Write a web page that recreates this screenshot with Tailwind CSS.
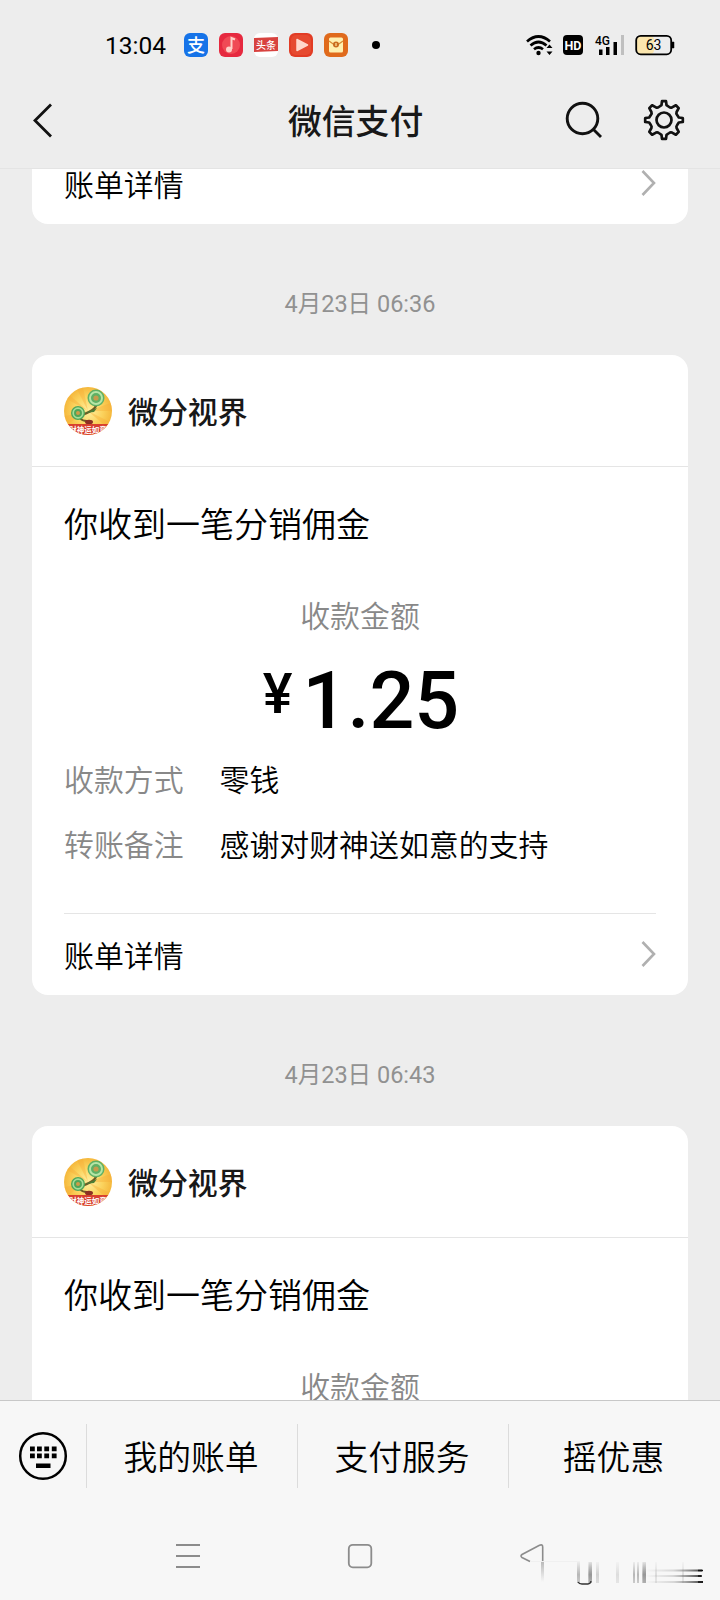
<!DOCTYPE html>
<html lang="zh-CN">
<head>
<meta charset="utf-8">
<title>微信支付</title>
<script src="https://cdn.jsdelivr.net/npm/@tailwindcss/browser@4"></script>
</head>
<body class="bg-[#ededed] font-['Noto_Sans_CJK_SC',sans-serif] font-[350] text-black">
<svg width="0" height="0" class="absolute">
  <defs>
    <radialGradient id="gold"><stop offset="0" stop-color="#fff0a0"/><stop offset=".6" stop-color="#fbd35e"/><stop offset="1" stop-color="#f5b83c"/></radialGradient>
    <clipPath id="disc"><circle cx="24" cy="24" r="24"/></clipPath>
    <symbol id="avatar" viewBox="0 0 48 48">
      <g clip-path="url(#disc)">
        <rect width="48" height="48" fill="url(#gold)"/>
        <path d="M24 24L-4 8V0ZM24 24L10-4H18ZM24 24L52 14V24ZM24 24L52 38V48ZM24 24L-4 30V42Z" fill="#f7ac36" opacity=".4"/>
        <path d="M14 29Q33 24 33 15M16 31Q18 34 23 34L27 36" fill="none" stroke="#6d5a24" stroke-width="2.2"/>
        <path d="M21 26L33 21L30 25Z" fill="#4b7d35"/>
        <circle cx="32" cy="11" r="8.500" fill="#5fb065"/><circle cx="32" cy="11" r="6" fill="none" stroke="#b6e5a5" stroke-width="2"/><circle cx="32" cy="11" r="2.6" fill="#c59c4c"/>
        <circle cx="14" cy="26" r="7" fill="#4fa558"/><circle cx="14" cy="26" r="4.8" fill="none" stroke="#a6de98" stroke-width="1.7"/><circle cx="14" cy="26" r="2" fill="#d09b48"/>
        <ellipse cx="25" cy="35" rx="4" ry="2.3" fill="#8c3024"/>
        <rect y="37" width="48" height="11" fill="#d8402f"/>
        <text x="24" y="45.800" text-anchor="middle" font-size="7.500" font-weight="700" fill="#fff">财神运如意</text>
      </g>
    </symbol>
    <symbol id="chevron" viewBox="0 0 16 28"><path d="M2.500 2L14 14L2.500 26" fill="none" stroke="#b0b0b0" stroke-width="2.600"/></symbol>
  </defs>
</svg>
<div class="flex h-[1600px] w-[720px] flex-col overflow-hidden">
  <header class="flex h-[169px] shrink-0 flex-col border-b border-[#e4e4e4] bg-[#ededed]">
    <div class="flex h-20 items-center pt-[9px] pl-[105px]">
      <span class="w-[79px] pt-0.5 font-[Roboto,sans-serif] text-[24.5px] leading-8 font-normal">13:04</span>
      <div class="flex gap-[11px]">
        <svg width="24" height="24"><rect width="24" height="24" rx="6" fill="#1673e8"/><text x="12" y="18.500" text-anchor="middle" font-size="18" font-weight="500" fill="#fff">支</text></svg>
        <svg width="24" height="24"><rect width="24" height="24" rx="6" fill="#e6293f"/><circle cx="12" cy="12" r="9" fill="#f04a55"/><path d="M12.500 16V5L16 6.500" fill="none" stroke="#ffd0c8" stroke-width="2"/><circle cx="10" cy="16.500" r="3" fill="#ffd0c8"/></svg>
        <svg width="24" height="24"><rect width="24" height="24" rx="6" fill="#fff"/><path d="M0 5L24 4V18L0 19Z" fill="#d8423f"/><text x="12" y="15.500" text-anchor="middle" font-size="10" font-weight="500" fill="#fff">头条</text></svg>
        <svg width="24" height="24"><rect width="24" height="24" rx="6" fill="#e23c25"/><rect x="2" y="2" width="20" height="20" rx="5" fill="#e64a30"/><path d="M8 6.500L18.500 12L8 17.500Z" fill="#ffd8cc" stroke="#ffd8cc" stroke-width="1.500" stroke-linejoin="round"/></svg>
        <svg width="24" height="24"><rect width="24" height="24" rx="6" fill="#e06a1c"/><rect x="5" y="4.500" width="14" height="15" rx="1.500" fill="#fff0b0"/><path d="M5 8L12 13L19 8" fill="none" stroke="#d98a34" stroke-width="1.300"/><circle cx="12" cy="11.500" r="3" fill="#c96b1f"/><path d="M12 10V13" stroke="#ffe9a0" stroke-width="1.200"/></svg>
      </div>
      <span class="ml-[24px] h-2 w-2 rounded-full bg-black"></span>
      <svg class="ml-[146px]" width="160" height="24" viewBox="0 0 160 24">
        <g fill="none" stroke="#000" stroke-width="2.700"><path d="M1 8.500Q12.500-1.500 24 8.500M4.500 12.500Q12.500 5.500 20.500 12.500M8 16.300Q12.500 12.700 17 16.300"/></g>
        <circle cx="12.500" cy="20" r="2.200"/><path d="M20.500 14L23.500 10.500L26.500 14ZM20.500 17.500L23.500 21L26.500 17.500Z" transform="translate(0 1)"/>
        <rect x="37" y="2" width="20" height="20" rx="4"/><text x="47" y="16.500" text-anchor="middle" font-family="Roboto,sans-serif" font-size="12.500" font-weight="700" fill="#fff">HD</text>
        <text x="69" y="12" font-family="Roboto,sans-serif" font-size="13" font-weight="500" textLength="15" lengthAdjust="spacingAndGlyphs">4G</text>
        <path d="M73 16.500h3.500V22H73ZM80 14h3.500v8H80ZM87.500 9h3.500v13H87.500Z"/><path d="M95 2h3v20H95Z" fill="#bfbfbf"/>
        <rect x="111" y="3" width="17" height="18" rx="4" fill="#fbe6ae"/><rect x="110.200" y="2.800" width="35" height="18.500" rx="4.500" fill="none" stroke="#000" stroke-width="1.800"/><path d="M146 9h2v6h-2Z" stroke="#000" stroke-width=".5"/>
        <text x="127.500" y="17" text-anchor="middle" font-family="Roboto,sans-serif" font-size="14" font-weight="400">63</text>
      </svg>
    </div>
    <div class="flex h-20 items-center px-8 pr-[35px]">
      <svg width="24" height="36" viewBox="0 0 24 36"><path d="M19 2.500L3 18.500L19 34.500" fill="none" stroke="#111" stroke-width="2.800"/></svg>
      <h1 class="mb-px ml-[232px] text-[33.8px] leading-none font-medium whitespace-nowrap text-[#181818]">微信支付</h1>
      <svg class="ml-auto" width="40" height="40" viewBox="0 0 40 40"><g fill="none" stroke="#111" stroke-width="2.900"><circle cx="18.500" cy="18.500" r="15.300"/><path d="M29 29L37 37"/></g></svg>
      <svg class="ml-[39px]" width="42" height="42" viewBox="-21 -21 42 42"><g fill="none" stroke="#111" stroke-width="2.700" stroke-linejoin="round"><circle r="7.500"/><path d="M-5.200-13L-2.500-14.800L-2-18.800H2L2.500-14.800L5.200-13Q6.500-12 8-12.600L11.900-14.700L14.700-11.900L12.600-8Q12-6.500 13-5.200L14.800-2.500L18.800-2V2L14.800 2.500L13 5.200Q12 6.500 12.600 8L14.700 11.900L11.900 14.700L8 12.600Q6.500 12 5.200 13L2.500 14.800L2 18.800H-2L-2.500 14.800L-5.200 13Q-6.500 12-8 12.600L-11.900 14.700L-14.700 11.900L-12.600 8Q-12 6.500-13 5.200L-14.800 2.500L-18.800 2V-2L-14.800-2.500L-13-5.200Q-12-6.500-12.600-8L-14.700-11.900L-11.900-14.700L-8-12.600Q-6.500-12-5.200-13Z"/></g></svg>
    </div>
  </header>
  <main class="h-[1231px] shrink-0 overflow-hidden px-8">
    <section class="flex h-[55px] items-start justify-between rounded-b-2xl bg-white px-8">
      <span class="text-[29.9px] leading-[28px]">账单详情</span>
      <svg width="16" height="28"><use href="#chevron"/></svg>
    </section>
    <div class="flex h-[131px] items-center justify-center pt-[30px] font-[Roboto,'Noto_Sans_CJK_SC',sans-serif] text-[23.5px] font-normal text-[#919191]">4月23日 06:36</div>
    <section class="flex h-[640px] flex-col rounded-2xl bg-white">
      <div class="flex h-[112px] shrink-0 items-center gap-4 border-b border-[#e5e5e5] px-8">
        <svg width="48" height="48"><use href="#avatar"/></svg>
        <span class="mb-0.5 text-[29.9px] leading-10 font-medium text-[#181818]">微分视界</span>
      </div>
      <div class="mt-7 px-8 text-[34px] leading-[56px]">你收到一笔分销佣金</div>
      <div class="mt-[43px] text-center text-[29.9px] leading-10 text-[#888]">收款金额</div>
      <div class="flex h-[124px] items-start justify-center gap-2.5 pl-0.5 font-[Roboto,sans-serif] font-medium">
        <span class="mt-[34px] text-[56px] leading-[52px]">¥</span><span class="text-[79px] leading-[135px]">1.25</span>
      </div>
      <div class="flex gap-9 px-8 text-[29.9px] leading-10"><span class="text-[#888]">收款方式</span><span>零钱</span></div>
      <div class="mt-[25px] flex gap-9 px-8 text-[29.9px] leading-10"><span class="text-[#888]">转账备注</span><span>感谢对财神送如意的支持</span></div>
      <div class="mx-8 mt-auto flex h-[82px] items-center justify-between border-t border-[#e5e5e5]">
        <span class="mb-0.5 text-[29.9px] leading-10">账单详情</span>
        <svg class="mb-0.5" width="16" height="28"><use href="#chevron"/></svg>
      </div>
    </section>
    <div class="flex h-[131px] items-center justify-center pt-[30px] font-[Roboto,'Noto_Sans_CJK_SC',sans-serif] text-[23.5px] font-normal text-[#919191]">4月23日 06:43</div>
    <section class="flex h-[640px] flex-col rounded-2xl bg-white">
      <div class="flex h-[112px] shrink-0 items-center gap-4 border-b border-[#e5e5e5] px-8">
        <svg width="48" height="48"><use href="#avatar"/></svg>
        <span class="mb-0.5 text-[29.9px] leading-10 font-medium text-[#181818]">微分视界</span>
      </div>
      <div class="mt-7 px-8 text-[34px] leading-[56px]">你收到一笔分销佣金</div>
      <div class="mt-[43px] text-center text-[29.9px] leading-10 text-[#888]">收款金额</div>
    </section>
  </main>
  <footer class="h-[200px] shrink-0 border-t border-[#c8c8c8] bg-[#f7f7f7]">
    <div class="flex h-[110px] items-center text-[33.8px] leading-10">
      <div class="flex w-[86px] items-center justify-center">
        <svg width="50" height="50" viewBox="-25 -25 50 50"><circle r="22.800" fill="none" stroke="#000" stroke-width="2.500"/><path d="M-13-9.500h4.800v4.800H-13ZM-6-9.500h4.800v4.800H-6ZM1.300-9.500h4.800v4.800H1.300ZM8.800-9.500h4.800v4.800H8.800ZM-13-2.500h4.800v4.800H-13ZM-6-2.500h4.800v4.800H-6ZM1.300-2.500h4.800v4.800H1.300ZM8.800-2.500h4.800v4.800H8.800ZM-7 7.500H7.500V12H-7Z"/></svg>
      </div>
      <div class="flex h-16 w-[211px] items-center justify-center border-l border-[#dcdcdc] pr-0.5">我的账单</div>
      <div class="flex h-16 w-[211px] items-center justify-center border-l border-[#dcdcdc] pr-0.5">支付服务</div>
      <div class="flex h-16 w-[212px] items-center justify-center border-l border-[#dcdcdc] pr-0.5">摇优惠</div>
    </div>
    <div class="flex h-[89px] items-start pt-[32px] pl-[176px]">
      <svg width="24" height="26"><path d="M0 2H24M0 13H24M0 24H24" stroke="#8c8c8c" stroke-width="1.800"/></svg>
      <svg class="ml-[147px]" width="26" height="26"><rect x="1.800" y="1.800" width="22.500" height="22.500" rx="4" fill="none" stroke="#8c8c8c" stroke-width="1.800"/></svg>
      <svg class="ml-[146px]" width="186" height="44" viewBox="519 1543 186 44">
        <defs>
          <linearGradient id="down" x2="0" y2="1"><stop stop-color="#777" stop-opacity=".08"/><stop offset=".6" stop-color="#777" stop-opacity=".5"/><stop offset="1" stop-color="#888" stop-opacity=".4"/></linearGradient>
          <linearGradient id="right"><stop stop-color="#777" stop-opacity="0"/><stop offset=".5" stop-color="#777" stop-opacity=".25"/><stop offset="1" stop-color="#444"/></linearGradient>
          <linearGradient id="fade" x2="0" y2="1"><stop stop-color="#777" stop-opacity=".5"/><stop offset="1" stop-color="#777" stop-opacity="0"/></linearGradient>
        </defs>
        <path d="M530 1561.500L522 1557.500Q520 1556 522 1554.500L539.500 1545.200Q542.700 1544 542.700 1547V1561" fill="none" stroke="#8c8c8c" stroke-width="1.600"/>
        <rect x="541" y="1561" width="3" height="21" fill="url(#fade)"/>
        <rect x="530" y="1561" width="50" height="1" fill="#f0f0f0"/>
        <g fill="url(#down)"><rect x="577" y="1562" width="3" height="21"/><rect x="588" y="1562" width="4" height="21"/><rect x="589" y="1562" width="3" height="21"/><rect x="596" y="1562" width="3" height="21" opacity=".6"/><rect x="616" y="1562" width="3" height="21" opacity=".4"/><rect x="633" y="1562" width="2" height="21"/><rect x="637" y="1562" width="2" height="21"/><rect x="642" y="1562" width="4" height="21"/><rect x="643" y="1562" width="3" height="21"/><rect x="655" y="1562" width="2" height="21" opacity=".4"/><rect x="682" y="1562" width="2" height="21" opacity=".4"/></g>
        <path d="M578 1582Q579 1584 582 1584H588Q590.500 1584 591 1581" fill="none" stroke="#333" stroke-width="1.300"/>
        <g fill="url(#right)"><rect x="645" y="1569.500" width="57" height="2"/><rect x="645" y="1575" width="56" height="2"/><rect x="645" y="1581" width="58" height="2"/></g>
        <path d="M698 1570.500h5M698 1576h4M698 1582h5" stroke="#111" stroke-width="1.300"/>
      </svg>
    </div>
  </footer>
</div>
</body>
</html>
